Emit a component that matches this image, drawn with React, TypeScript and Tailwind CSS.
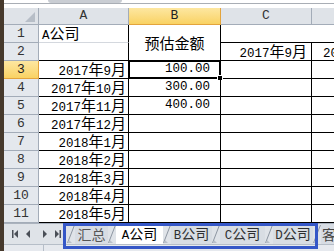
import React from 'react';

const mono = "font-['Liberation_Mono',monospace]";
const cjk = "font-['Noto_Sans_CJK_SC',sans-serif]";

function T({ s, cls = 'text-[15px]' }: { s: string; cls?: string }) {
  const parts = s.split(/([\x00-\x7f]+)/).filter(Boolean);
  return (
    <span className="inline-flex items-baseline leading-none whitespace-nowrap text-black">
      {parts.map((p, i) =>
        /^[\x00-\x7f]+$/.test(p) ? (
          <span key={i} className={`${mono} text-[12.5px]`}>{p}</span>
        ) : (
          <span key={i} className={`${cjk} ${cls}`}>{p}</span>
        )
      )}
    </span>
  );
}

const colA = ['A公司', '', '2017年9月', '2017年10月', '2017年11月', '2017年12月', '2018年1月', '2018年2月', '2018年3月', '2018年4月', '2018年5月'];
const colB = ['', '', '100.00', '300.00', '400.00', '', '', '', '', '', ''];

function RowHead({ n }: { n: number }) {
  const sel = n === 3;
  return (
    <div
      className={
        sel
          ? `flex items-center justify-center border-r border-b border-[#e3a43c] bg-linear-to-b from-[#fde7a0] to-[#f9d262] text-[#222] ${mono} text-[13px]`
          : `flex items-center justify-center border-r border-b border-[#a3acb8] bg-[#e4e8ed] text-[#333] ${mono} text-[13px]`
      }
    >
      {n}
    </div>
  );
}

function Arrows() {
  return (
    <svg width="59" height="21" viewBox="0 0 59 21">
      <g fill="#4a4f57">
        <rect x="8" y="6" width="1.5" height="8" />
        <path d="M10 10 L14 6 L14 14 Z" />
        <path d="M22 10 L26 6 L26 14 Z" />
        <path d="M39 6 L43 10 L39 14 Z" />
        <path d="M51 6 L55 10 L51 14 Z" />
        <rect x="55.5" y="6" width="1.5" height="8" />
      </g>
    </svg>
  );
}

function Slant() {
  return (
    <svg width="8" height="20" viewBox="0 0 8 20" className="shrink-0">
      <path d="M0.5 19 L7.5 1" stroke="#8d96a2" strokeWidth="1" fill="none" />
      <path d="M0.5 19 L5 19 L2 16 Z" fill="#b9c0c9" />
    </svg>
  );
}

export default function App() {
  const rows = Array.from({ length: 11 }, (_, i) => i + 1);
  return (
    <div className="relative flex h-[251px] w-[334px] overflow-hidden bg-white">
      <div className="w-[4px] shrink-0 bg-[#46392c]" />
      <div className="flex min-w-0 flex-1 flex-col overflow-hidden">
        {/* top strip */}
        <div className="flex h-[8px] flex-col bg-white">
          <div className="flex h-[4px] border-b border-[#a9aeb5]">
            <div className="w-[44px]" />
            <div className="h-[3px] w-[74px] rounded-b-[4px] bg-[#c9cdd3]" />
          </div>
        </div>
        {/* sheet grid */}
        <div className="grid w-max grid-cols-[35px_90px_92px_91px_91px] grid-rows-[17px_repeat(11,18px)]">
          {/* header row */}
          <div className="relative border-r border-b border-[#a3acb8] bg-[#dfe3e8]">
            <svg width="10" height="10" viewBox="0 0 10 10" className="absolute right-[3px] bottom-[2px]">
              <path d="M10 0 L10 10 L0 10 Z" fill="#b7bec7" />
            </svg>
          </div>
          <div className={`flex items-center justify-center border-r border-b border-[#a3acb8] bg-[#dfe3e8] text-[#333] ${mono} text-[13px]`}>A</div>
          <div className={`flex items-center justify-center border-r border-b border-[#e3a43c] bg-linear-to-b from-[#fde7a0] to-[#f9d262] text-[#222] ${mono} text-[13px]`}>B</div>
          <div className={`flex items-center justify-center border-r border-b border-[#a3acb8] bg-[#dfe3e8] text-[#333] ${mono} text-[13px]`}>C</div>
          <div className={`flex items-center justify-center border-r border-b border-[#a3acb8] bg-[#dfe3e8] text-[#333] ${mono} text-[13px]`}>D</div>

          {rows.map((r) => (
            <React.Fragment key={r}>
              <RowHead n={r} />
              {/* A */}
              <div
                className={
                  r === 1
                    ? 'flex items-center border-r border-b border-r-black border-b-[#d4d8de] pl-[3px]'
                    : 'flex items-center justify-end border-r border-b border-black pr-[2px]'
                }
              >
                {colA[r - 1] && <T s={colA[r - 1]} />}
              </div>
              {/* B */}
              {r === 1 && (
                <div className="row-span-2 flex items-center justify-center border-r border-b border-black">
                  <T s="预估金额" />
                </div>
              )}
              {r >= 3 && (
                <div className="relative flex items-center justify-end border-r border-b border-black pr-[10px]">
                  {colB[r - 1] && <T s={colB[r - 1]} />}
                  {r === 3 && (
                    <div className="absolute -top-[1px] -left-[1px] -right-[1px] -bottom-[1px] border-2 border-black">
                      <div className="absolute -right-[4px] -bottom-[4px] h-[6px] w-[6px] border border-white bg-black" />
                    </div>
                  )}
                </div>
              )}
              {/* C */}
              <div
                className={
                  r === 1
                    ? 'border-b border-black'
                    : 'flex items-center justify-end border-r border-b border-black pr-[4px]'
                }
              >
                {r === 2 && <T s="2017年9月" />}
              </div>
              {/* D */}
              <div
                className={
                  r === 1
                    ? 'border-b border-black'
                    : 'flex items-center justify-end border-r border-b border-black pr-[4px]'
                }
              >
                {r === 2 && <T s="2017年10月" />}
              </div>
            </React.Fragment>
          ))}
        </div>
        {/* tab bar */}
        <div className="flex h-[21px] shrink-0 items-end border-t border-[#aab2bd] bg-[#dfe3e8]">
          <div className="flex h-full w-[63px] shrink-0 items-center">
            <Arrows />
          </div>
          <div className="flex h-[20px] items-end">
            <Slant />
            <div className="flex h-full w-[33px] items-center justify-center bg-[#d7dce3] text-[#555]">
              <span className={`${cjk} text-[14px] leading-none text-[#555]`}>汇总</span>
            </div>
            <Slant />
            <div className="flex h-full w-[47px] items-center justify-center bg-white">
              <T s="A公司" cls="text-[14px]" />
            </div>
            <Slant />
            <div className="flex h-full w-[41px] items-center justify-center bg-[#d7dce3] opacity-80">
              <T s="B公司" cls="text-[14px]" />
            </div>
            <Slant />
            <div className="flex h-full w-[45px] items-center justify-center bg-[#d7dce3] opacity-80">
              <T s="C公司" cls="text-[14px]" />
            </div>
            <Slant />
            <div className="flex h-full w-[40px] items-center justify-center bg-[#d7dce3] opacity-80">
              <T s="D公司" cls="text-[14px]" />
            </div>
            <Slant />
            <div className="flex h-full w-[30px] items-center bg-[#d7dce3] pl-[1px]">
              <span className={`${cjk} text-[14px] leading-none text-[#444]`}>客户</span>
            </div>
          </div>
        </div>
        {/* status bar */}
        <div className="flex h-[7px] shrink-0 overflow-hidden border-t border-[#b6bec8] bg-[#e6e9ee]">
          <div className="w-[40px] border-r border-[#b6bec8] pl-[8px] pt-[2px]">
            <span className={`${cjk} text-[13px] leading-none text-[#333]`}>就绪</span>
          </div>
        </div>
      </div>
      {/* annotation box */}
      <div className="pointer-events-none absolute left-[63px] top-[223px] h-[26px] w-[255px] border-[3px] border-[#3557c7]" />
    </div>
  );
}
